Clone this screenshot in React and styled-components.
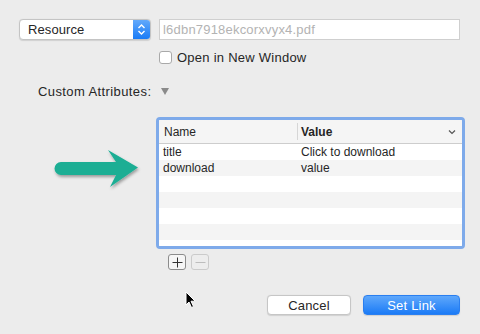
import React from 'react'
import styled, { createGlobalStyle } from 'styled-components'

const Global = createGlobalStyle`
    html, body {
        margin: 0;
        padding: 0;
        background: #ececec;
    }
    body {
        font-family: "Liberation Sans", Arial, sans-serif;
        color: #262626;
    }
`

const Dialog = styled.div`
    position: relative;
    width: 480px;
    height: 334px;
    overflow: hidden;
    display: flex;
    flex-direction: column;
    background: #ececec;
`

const TopRow = styled.div`
    display: flex;
    align-items: center;
    gap: 8px;
    padding: 19px 0 0 19px;
`

const Popup = styled.div`
    box-sizing: border-box;
    width: 132px;
    height: 21px;
    display: flex;
    background: #fff;
    border: 1px solid #c4c4c4;
    border-radius: 4px;
    overflow: hidden;
    box-shadow: 0 0.5px 1px rgba(0, 0, 0, 0.12);
`

const PopupLabel = styled.div`
    flex: 1;
    font-size: 13px;
    line-height: 19px;
    padding-left: 8px;
    letter-spacing: 0.1px;
`

const Stepper = styled.div`
    width: 17px;
    display: flex;
    align-items: center;
    justify-content: center;
    background: linear-gradient(#62a9fb, #1a7bf6);
`

const TextField = styled.div`
    box-sizing: border-box;
    width: 301px;
    height: 21px;
    background: #fff;
    border: 1px solid #cfcfcf;
    font-size: 13px;
    line-height: 19px;
    padding-left: 3px;
    color: #b3b3b3;
    letter-spacing: 0.2px;
`

const CheckRow = styled.label`
    display: flex;
    align-items: center;
    gap: 5px;
    margin: 10px 0 0 159px;
    font-size: 13px;
    letter-spacing: 0.25px;
`

const Check = styled.span`
    box-sizing: border-box;
    width: 13px;
    height: 13px;
    background: #fff;
    border: 1px solid #a9a9a9;
    border-radius: 3px;
`

const AttrRow = styled.div`
    display: flex;
    align-items: center;
    gap: 10px;
    margin: 18px 0 0 38px;
    height: 16px;
    font-size: 13px;
    letter-spacing: 0.4px;
`

const Disclosure = styled.span`
    width: 0;
    height: 0;
    border-left: 4.5px solid transparent;
    border-right: 4.5px solid transparent;
    border-top: 7px solid #8a8a8a;
    margin-top: 1px;
`

const TableRow = styled.div`
    display: flex;
    margin-top: 18px;
`

const ArrowSlot = styled.div`
    width: 156px;
    padding-top: 30px;
    padding-left: 50px;
    box-sizing: border-box;
`

const Frame = styled.div`
    box-sizing: border-box;
    width: 309px;
    height: 132px;
    border: 3px solid #7eaaea;
    border-radius: 4px;
    background: #fff;
    overflow: hidden;
`

const Header = styled.div`
    display: flex;
    height: 23px;
    align-items: center;
    background: #f5f5f5;
    border-bottom: 1px solid #cdcdcd;
    font-size: 12px;
`

const HeadCell = styled.div`
    box-sizing: border-box;
    width: ${p => p.$w ? `${p.$w}px` : 'auto'};
    flex: ${p => p.$w ? 'none' : 1};
    display: flex;
    align-items: center;
    height: 17px;
    padding-left: ${p => p.$bold ? 3 : 5}px;
    font-weight: ${p => p.$bold ? 'bold' : 'normal'};
    border-left: ${p => p.$bold ? '1px solid #d6d6d6' : 'none'};
    justify-content: space-between;
    padding-right: 6px;
`

const Row = styled.div`
    display: flex;
    height: 16px;
    align-items: center;
    font-size: 12px;
    background: ${p => p.$odd ? '#f4f4f4' : '#fff'};
`

const Cell = styled.div`
    box-sizing: border-box;
    width: ${p => p.$w ? `${p.$w}px` : 'auto'};
    flex: ${p => p.$w ? 'none' : 1};
    padding-left: 4px;
`

const PlusMinus = styled.div`
    display: flex;
    gap: 5px;
    margin: 5px 0 0 168px;
`

const SmallButton = styled.div`
    box-sizing: border-box;
    width: 18px;
    height: 16px;
    display: flex;
    align-items: center;
    justify-content: center;
    border: 1px solid ${p => p.$disabled ? '#cbcbcb' : '#8c8c8c'};
    border-radius: 3px;
    background: ${p => p.$disabled ? '#ededed' : '#f6f6f6'};
`

const Footer = styled.div`
    display: flex;
    justify-content: flex-end;
    gap: 12px;
    margin-top: 25px;
    padding-right: 20px;
`

const Button = styled.div`
    box-sizing: border-box;
    width: ${p => p.$w}px;
    height: 20px;
    display: flex;
    align-items: center;
    justify-content: center;
    font-size: 13px;
    letter-spacing: 0.2px;
    border-radius: 4px;
    color: ${p => p.$primary ? '#fff' : '#262626'};
    background: ${p => p.$primary ? 'linear-gradient(#5fa8fb, #1b7bf6)' : '#fff'};
    border: 1px solid ${p => p.$primary ? '#2a7ff0' : '#c6c6c6'};
    box-shadow: 0 0.5px 1px rgba(0, 0, 0, 0.12);
`

const Cursor = styled.svg`
    position: absolute;
    left: 185px;
    top: 291px;
`

const rows = [
    ['title', 'Click to download'],
    ['download', 'value'],
    ['', ''], ['', ''], ['', ''], ['', ''], ['', '']
]

const App = () => (
    <Dialog>
        <Global />
        <TopRow>
            <Popup>
                <PopupLabel>Resource</PopupLabel>
                <Stepper>
                    <svg width="9" height="13" viewBox="0 0 9 13">
                        <path d="M1.5 5 L4.5 2 L7.5 5 M1.5 8 L4.5 11 L7.5 8" fill="none" stroke="#fff" strokeWidth="1.4" />
                    </svg>
                </Stepper>
            </Popup>
            <TextField>l6dbn7918ekcorxvyx4.pdf</TextField>
        </TopRow>
        <CheckRow>
            <Check />
            Open in New Window
        </CheckRow>
        <AttrRow>
            Custom Attributes:
            <Disclosure />
        </AttrRow>
        <TableRow>
            <ArrowSlot>
                <svg width="95" height="48" viewBox="50 145 95 48">
                    <defs>
                        <filter id="sh" x="-20%" y="-20%" width="140%" height="160%">
                            <feDropShadow dx="1" dy="2" stdDeviation="1.4" floodColor="#000" floodOpacity="0.35" />
                        </filter>
                    </defs>
                    <path d="M61 160 L116 160 L108 148 L138 165.5 L110 185 L116 173 L61 173 A6.5 6.5 0 0 1 61 160 Z" fill="#1aae94" filter="url(#sh)" />
                </svg>
            </ArrowSlot>
            <Frame>
                <Header>
                    <HeadCell $w={138}>Name</HeadCell>
                    <HeadCell $bold>
                        Value
                        <svg width="8" height="6" viewBox="0 0 8 6">
                            <path d="M1 1.5 L4 4.5 L7 1.5" fill="none" stroke="#555" strokeWidth="1.2" />
                        </svg>
                    </HeadCell>
                </Header>
                {rows.map((r, i) => (
                    <Row key={i} $odd={i % 2 === 1}>
                        <Cell $w={138}>{r[0]}</Cell>
                        <Cell>{r[1]}</Cell>
                    </Row>
                ))}
            </Frame>
        </TableRow>
        <PlusMinus>
            <SmallButton>
                <svg width="11" height="11" viewBox="0 0 11 11">
                    <path d="M5.5 0.5 V10.5 M0.5 5.5 H10.5" stroke="#333" strokeWidth="1" />
                </svg>
            </SmallButton>
            <SmallButton $disabled>
                <svg width="11" height="11" viewBox="0 0 11 11">
                    <path d="M0.5 5.5 H10.5" stroke="#bdbdbd" strokeWidth="1" />
                </svg>
            </SmallButton>
        </PlusMinus>
        <Footer>
            <Button $w={84}>Cancel</Button>
            <Button $w={97} $primary>Set Link</Button>
        </Footer>
        <Cursor width="12" height="18" viewBox="0 0 12 18">
            <path d="M1 1 L1 14 L4 11 L6.5 16.5 L8.5 15.5 L6 10.2 L10.2 10.2 Z" fill="#000" stroke="#fff" strokeWidth="1" />
        </Cursor>
    </Dialog>
)

export default App
